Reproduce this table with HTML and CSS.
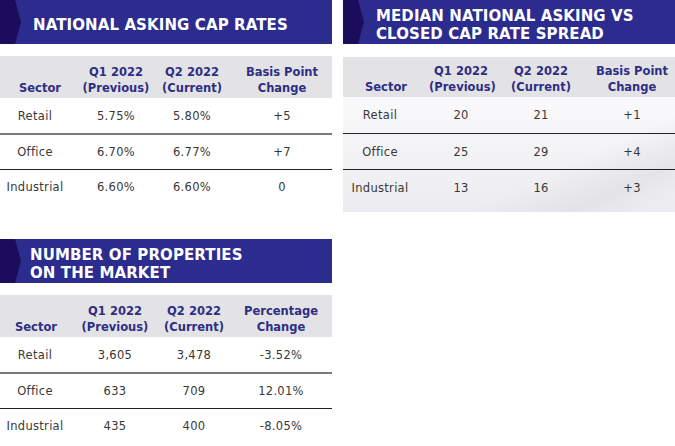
FILE: index.html
```html
<!DOCTYPE html>
<html>
<head>
<meta charset="utf-8">
<link rel="stylesheet" href="styles.css">
</head>
<body>
<div class="page">
  <section class="panel p1">
    <div class="band"><h2>NATIONAL ASKING CAP RATES</h2></div>
    <table class="tbl">
      <thead><tr><th class="c1">Sector</th><th class="c2">Q1 2022<br>(Previous)</th><th class="c3">Q2 2022<br>(Current)</th><th class="c4">Basis Point<br>Change</th></tr></thead>
      <tbody>
        <tr class="gray"><td class="s">Retail</td><td>5.75%</td><td>5.80%</td><td>+5</td></tr>
        <tr class="dark"><td class="s">Office</td><td>6.70%</td><td>6.77%</td><td>+7</td></tr>
        <tr><td class="s">Industrial</td><td>6.60%</td><td>6.60%</td><td>0</td></tr>
      </tbody>
    </table>
  </section>
  <section class="panel p2">
    <div class="band"><h2>MEDIAN NATIONAL ASKING VS<br>CLOSED CAP RATE SPREAD</h2></div>
    <div class="bgbox">
    <table class="tbl">
      <thead><tr><th class="c1">Sector</th><th class="c2">Q1 2022<br>(Previous)</th><th class="c3">Q2 2022<br>(Current)</th><th class="c4">Basis Point<br>Change</th></tr></thead>
      <tbody>
        <tr class="dark"><td class="s">Retail</td><td>20</td><td>21</td><td>+1</td></tr>
        <tr class="dark"><td class="s">Office</td><td>25</td><td>29</td><td>+4</td></tr>
        <tr><td class="s">Industrial</td><td>13</td><td>16</td><td>+3</td></tr>
      </tbody>
    </table>
    </div>
  </section>
  <section class="panel p3">
    <div class="band"><h2>NUMBER OF PROPERTIES<br>ON THE MARKET</h2></div>
    <table class="tbl">
      <thead><tr><th class="c1">Sector</th><th class="c2">Q1 2022<br>(Previous)</th><th class="c3">Q2 2022<br>(Current)</th><th class="c4">Percentage<br>Change</th></tr></thead>
      <tbody>
        <tr class="gray"><td class="s">Retail</td><td>3,605</td><td>3,478</td><td>-3.52%</td></tr>
        <tr class="dark"><td class="s">Office</td><td>633</td><td>709</td><td>12.01%</td></tr>
        <tr><td class="s">Industrial</td><td>435</td><td>400</td><td>-8.05%</td></tr>
      </tbody>
    </table>
  </section>
</div>
</body>
</html>
```

FILE: styles.css
```css
html, body { margin: 0; padding: 0; background: #fff; }
body { width: 675px; height: 446px; overflow: hidden; font-family: "DejaVu Sans", sans-serif; }
.page {
  display: grid;
  grid-template-columns: 332px 332px;
  column-gap: 11px;
  grid-template-rows: 239px auto;
}
.p3 { grid-column: 1; grid-row: 2; }
.band {
  position: relative;
  box-sizing: border-box;
  height: 44px;
  background: #2c2b8e;
  display: flex;
  align-items: center;
  padding-left: 33px;
  padding-top: 5px;
}
.band::before {
  content: "";
  position: absolute;
  left: 0; top: 0; bottom: 0;
  width: 22px;
  background: #1c0d5c;
  clip-path: polygon(0 0, 15px 0, 21px 50%, 15px 100%, 0 100%);
}
.band h2 {
  margin: 0;
  color: #fff;
  font-family: "DejaVu Sans", sans-serif;
  font-weight: bold;
  font-size: 15px;
  line-height: 18px;
  letter-spacing: 0.1px;
}
.p3 .band { padding-left: 30px; }
.tbl {
  width: 100%;
  border-collapse: collapse;
  margin-top: 12px;
  table-layout: fixed;
}
.tbl th {
  background: #e3e3e6;
  color: #2d2e84;
  font-size: 11.5px;
  font-weight: bold;
  line-height: 16px;
  height: 40px;
  padding: 0;
  vertical-align: bottom;
  padding-bottom: 2px;
  text-align: center;
}
.c1 { width: 80px; }
.c2 { width: 72px; }
.c3 { width: 80px; }
.tbl td {
  height: 34px;
  padding: 0;
  text-align: center;
  font-size: 11.5px;
  letter-spacing: 0.3px;
  color: #383838;
  vertical-align: middle;
}
.tbl td.s { padding-right: 10px; }
.tbl tr:first-child td { height: 35px; }
.tbl tr.gray td { border-bottom: 2px solid #7a7a7a; }
.tbl tr.dark td { border-bottom: 1px solid #222; }

.p2 .c1 { width: 86px; }
.p2 .c2 { width: 64px; }
.p2 .c3 { width: 96px; }
.p2 .tbl td.s { padding-right: 12px; }
.p2 .tbl { margin-top: 0; }
.p2 .tbl td { height: 35px; }
.p2 .tbl tr:first-child td { height: 36px; }
.bgbox {
  padding-top: 13px;
  padding-bottom: 7px;
  background:
    linear-gradient(155deg, rgba(255,255,255,0) 70%, rgba(214,214,220,0.45) 85%, rgba(255,255,255,0) 95%),
    linear-gradient(180deg, #ffffff 0%, #f8f8fa 40%, #ececf0 100%);
}
.p2 .tbl th { height: 38px; }

.p3 .c1 { width: 72px; }
.p3 .c2 { width: 86px; }
.p3 .c3 { width: 72px; }
.p3 .tbl td.s { padding-right: 2px; }
```
